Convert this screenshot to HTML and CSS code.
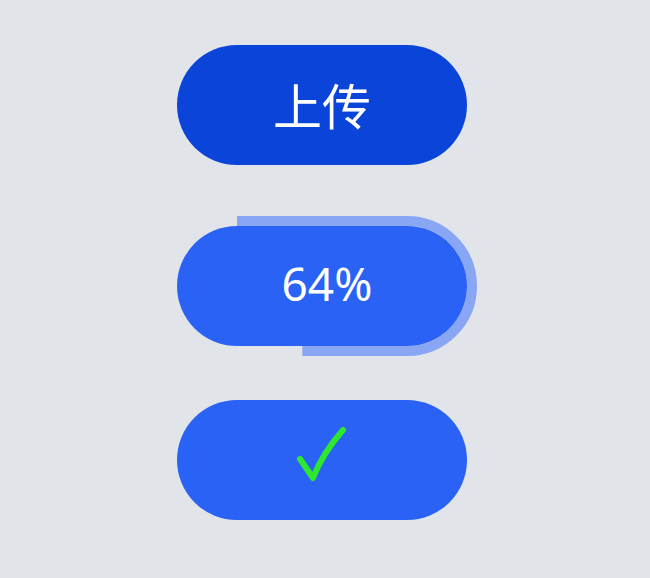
FILE: index.html
```html
<!DOCTYPE html>
<html lang="zh">
<head>
    <meta charset="UTF-8">
    <title>上传按钮</title>
    <link rel="stylesheet" href="styles.css">
</head>
<body>

<div class="stack">
    <button class="upload idle">上传</button>

    <div class="progress-wrap">
        <svg class="ring" width="310" height="140" viewBox="0 0 310 140">
            <rect x="5" y="5" width="300" height="130" rx="65" ry="65"
                  pathLength="100" stroke-dasharray="64 100"></rect>
        </svg>
        <button class="upload busy">64%</button>
    </div>

    <button class="upload done">
        <svg class="check" width="50" height="56" viewBox="0 0 50 56">
            <path d="M3 32 L16 51 C21 38 31 20 46 3"></path>
        </svg>
    </button>
</div>

</body>
</html>
```

FILE: styles.css
```css
body {
    margin: 0;
    background-color: #e1e5e9;
    font-family: 'Noto Sans', 'Noto Sans CJK SC', sans-serif;
    height: 100vh;
    overflow: hidden;
}

.stack {
    display: flex;
    flex-direction: column;
    align-items: flex-start;
    padding: 45px 0 0 177px;
}

.upload {
    width: 290px;
    height: 120px;
    border: none;
    border-radius: 60px;
    color: white;
    font-family: inherit;
    display: flex;
    justify-content: center;
    align-items: center;
    padding: 0;
    cursor: pointer;
}

.upload.idle {
    background-color: #0b44d8;
    font-family: 'Noto Sans CJK SC', sans-serif;
    font-size: 49px;
    padding-bottom: 4px;
}

.progress-wrap {
    position: relative;
    margin-top: 61px;
}

.ring {
    position: absolute;
    top: -10px;
    left: -10px;
}

.ring rect {
    fill: none;
    stroke: #88a6f4;
    stroke-width: 10;
}

.upload.busy {
    position: relative;
    background-color: #2962f5;
    font-size: 46px;
    padding: 0 0 6px 10px;
}

.upload.done {
    background-color: #2962f5;
    margin-top: 54px;
}

.check {
    margin-left: 0;
    margin-bottom: 10px;
}

.check path {
    fill: none;
    stroke: #2ee82e;
    stroke-width: 6;
    stroke-linecap: round;
    stroke-linejoin: round;
}
```
